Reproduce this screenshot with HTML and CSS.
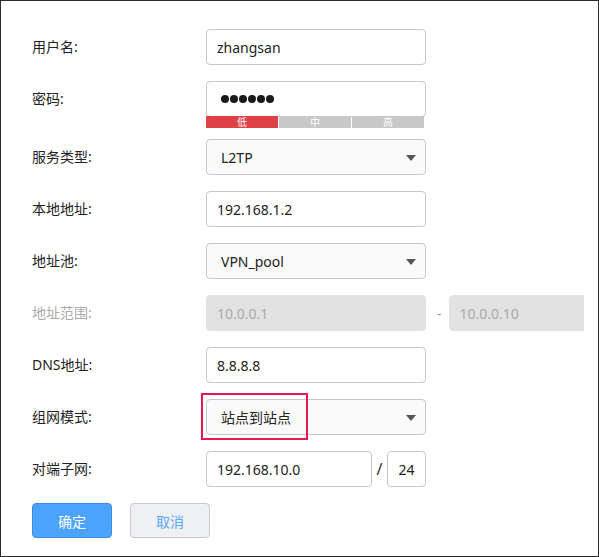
FILE: index.html
```html
<!DOCTYPE html>
<html lang="zh-CN">
<head>
  <meta charset="UTF-8">
  <title>VPN 用户设置</title>
  <link rel="stylesheet" href="styles.css">
</head>
<body>
<div class="frame">
  <form class="form" onsubmit="return false">
    <div class="row">
      <label class="label">用户名:</label>
      <input class="input" type="text" value="zhangsan">
    </div>
    <div class="row">
      <label class="label">密码:</label>
      <div class="pwd-wrap">
        <div class="input pwd">
          <span class="dot"></span><span class="dot"></span><span class="dot"></span>
          <span class="dot"></span><span class="dot"></span><span class="dot"></span>
        </div>
        <div class="strength">
          <span class="lv on">低</span>
          <span class="lv">中</span>
          <span class="lv">高</span>
        </div>
      </div>
    </div>
    <div class="row">
      <label class="label">服务类型:</label>
      <div class="select">
        <span>L2TP</span>
        <svg class="arrow" width="10" height="6" viewBox="0 0 10 6"><path d="M0 0h10L5 6z" fill="#555"/></svg>
      </div>
    </div>
    <div class="row">
      <label class="label">本地地址:</label>
      <input class="input" type="text" value="192.168.1.2">
    </div>
    <div class="row">
      <label class="label">地址池:</label>
      <div class="select">
        <span>VPN_pool</span>
        <svg class="arrow" width="10" height="6" viewBox="0 0 10 6"><path d="M0 0h10L5 6z" fill="#555"/></svg>
      </div>
    </div>
    <div class="row">
      <label class="label disabled">地址范围:</label>
      <div class="range">
        <input class="input off" type="text" value="10.0.0.1" disabled>
        <span class="dash">-</span>
        <input class="input off short" type="text" value="10.0.0.10" disabled>
      </div>
    </div>
    <div class="row">
      <label class="label">DNS地址:</label>
      <input class="input" type="text" value="8.8.8.8">
    </div>
    <div class="row">
      <label class="label">组网模式:</label>
      <div class="select marked">
        <span>站点到站点</span>
        <svg class="arrow" width="10" height="6" viewBox="0 0 10 6"><path d="M0 0h10L5 6z" fill="#555"/></svg>
      </div>
    </div>
    <div class="row">
      <label class="label">对端子网:</label>
      <div class="subnet">
        <input class="input net" type="text" value="192.168.10.0">
        <span class="slash">/</span>
        <input class="input mask" type="text" value="24">
      </div>
    </div>
    <div class="buttons">
      <button class="btn primary">确定</button>
      <button class="btn">取消</button>
    </div>
  </form>
</div>
</body>
</html>
```

FILE: styles.css
```css
body {
  margin: 0;
  background: #fff;
  font-family: 'Noto Sans', 'Noto Sans CJK SC', sans-serif;
}
.frame {
  width: 599px;
  height: 557px;
  box-sizing: border-box;
  border: 1px solid #2b2b2b;
  padding: 28px 14px 0 31px;
  background: #fff;
}
.form {
  display: flex;
  flex-direction: column;
  gap: 16px;
  overflow: hidden;
}
.row {
  display: grid;
  grid-template-columns: 174px minmax(0, 1fr);
  align-items: start;
}
.label {
  font-size: 14px;
  line-height: 36px;
  color: #222;
}
.label.disabled {
  color: #aaa;
}
.input, .select {
  width: 220px;
  height: 36px;
  box-sizing: border-box;
  border: 1px solid #c8c8c8;
  border-radius: 4px;
  background: #fff;
  padding: 0 10px;
  font-family: inherit;
  font-size: 14px;
  color: #222;
  outline: none;
}
.pwd-wrap {
  width: 220px;
}
.pwd {
  display: flex;
  align-items: center;
  gap: 1px;
  padding-left: 14px;
}
.dot {
  width: 8px;
  height: 8px;
  border-radius: 50%;
  background: #1a1a1a;
}
.strength {
  display: flex;
  gap: 1px;
  width: 218px;
  height: 12px;
  margin-top: -1px;
  margin-bottom: -5px;
}
.lv {
  flex: 1;
  background: #c8c8c8;
  color: #fff;
  font-size: 10px;
  line-height: 12px;
  text-align: center;
}
.lv.on {
  background: #de4146;
}
.select {
  position: relative;
  display: flex;
  align-items: center;
  padding-left: 14px;
  background: #fafafa;
  color: #222;
}
.select .arrow {
  position: absolute;
  right: 9px;
  top: 15px;
}
.select.marked::after {
  content: "";
  position: absolute;
  left: -6px;
  top: -7px;
  width: 103px;
  height: 43px;
  border: 2px solid #e5194f;
}
.range {
  display: flex;
  align-items: center;
}
.range .input {
  flex-shrink: 0;
}
.input.off {
  background: #e2e2e2;
  border-color: #e2e2e2;
  color: #aaa;
}
.input.short {
  width: 150px;
}
.dash {
  margin: 0 7px 0 11px;
  color: #999;
  font-size: 14px;
}
.subnet {
  display: flex;
  align-items: center;
  justify-content: space-between;
  width: 220px;
}
.input.net {
  width: 166px;
}
.input.mask {
  width: 39px;
  padding: 0;
  text-align: center;
}
.slash {
  font-size: 16px;
  color: #333;
}
.buttons {
  display: flex;
  gap: 18px;
}
.btn {
  width: 80px;
  height: 35px;
  border: 1px solid #c9c9c9;
  border-radius: 4px;
  background: #eef0f3;
  color: #5aa8f8;
  font-family: inherit;
  font-size: 14px;
}
.btn.primary {
  background: #4ca3fb;
  border-color: #3a8ee0;
  color: #fff;
}
```
